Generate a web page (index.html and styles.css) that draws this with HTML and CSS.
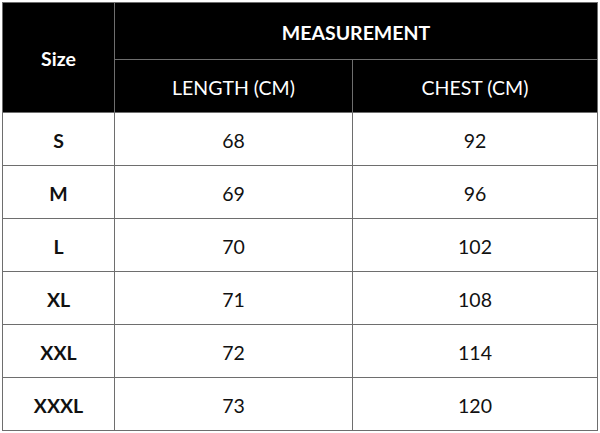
FILE: index.html
```html
<!DOCTYPE html>
<html>
<head>
<meta charset="utf-8">
<link rel="stylesheet" href="styles.css">
</head>
<body>
<table class="size-table">
  <colgroup>
    <col class="c1"><col class="c2"><col class="c3">
  </colgroup>
  <thead>
    <tr class="h1">
      <th rowspan="2" class="bold">Size</th>
      <th colspan="2" class="bold">MEASUREMENT</th>
    </tr>
    <tr class="h2">
      <th>LENGTH (CM)</th>
      <th>CHEST (CM)</th>
    </tr>
  </thead>
  <tbody>
    <tr><td class="bold">S</td><td>68</td><td>92</td></tr>
    <tr><td class="bold">M</td><td>69</td><td>96</td></tr>
    <tr><td class="bold">L</td><td>70</td><td>102</td></tr>
    <tr><td class="bold">XL</td><td>71</td><td>108</td></tr>
    <tr><td class="bold">XXL</td><td>72</td><td>114</td></tr>
    <tr><td class="bold">XXXL</td><td>73</td><td>120</td></tr>
  </tbody>
</table>
</body>
</html>
```
FILE: styles.css
```css
html, body {
  margin: 0;
  padding: 0;
  background: #ffffff;
}
body {
  padding: 2px 0 0 2px;
}
.size-table {
  border-collapse: collapse;
  width: 595px;
  table-layout: fixed;
  font-family: Lato, "Open Sans", sans-serif;
  font-size: 19.5px;
  color: #111;
}
.c1 { width: 112px; }
.c2 { width: 238px; }
.c3 { width: 245px; }
.size-table th,
.size-table td {
  border: 1px solid #6e6e6e;
  text-align: center;
  vertical-align: middle;
  padding: 3px 0 0 0;
  font-weight: 400;
  line-height: 1;
}
.size-table th {
  background: #000;
  color: #fff;
}
.h1 th { height: 53px; }
.h2 th { height: 49px; }
.size-table tbody td { height: 49px; }
.size-table .bold { font-weight: 700; }
```
